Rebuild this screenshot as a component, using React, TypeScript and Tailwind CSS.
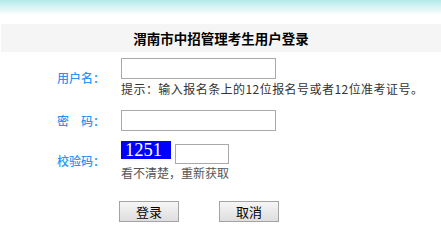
import React from "react";

const cjk = { fontFamily: '"Microsoft YaHei", "Noto Sans CJK SC", "Noto Sans", sans-serif' };

export default function App() {
  return (
    <div className="w-[441px] h-[242px] bg-white overflow-hidden" style={cjk}>
      <div className="h-[15px] bg-gradient-to-b from-[#b3eaea] to-white" />
      <div className="mt-[9px] ml-[1px] h-[28px] bg-[#f5f5f5] flex items-center justify-center text-[13.5px] font-bold text-black">
        渭南市中招管理考生用户登录
      </div>

      {/* row 1 */}
      <div className="mt-[6px] flex items-center">
        <div className="w-[121px] pl-[57px] text-[12px] leading-[16px] font-medium text-[#2b93f8]">用户名：</div>
        <div className="flex flex-col">
          <input className="w-[155px] h-[21px] border border-[#a9a9a9] bg-white outline-none" />
          <div className="mt-[1px] text-[12px] leading-[17px] tracking-[0.45px] text-[#333] whitespace-nowrap">
            提示：输入报名条上的12位报名号或者12位准考证号。
          </div>
        </div>
      </div>

      {/* row 2 */}
      <div className="mt-[13px] flex items-center">
        <div className="w-[121px] pl-[57px] text-[12px] leading-[16px] font-medium text-[#2b93f8]">密　码：</div>
        <input className="w-[155px] h-[21px] border border-[#a9a9a9] bg-white outline-none" />
      </div>

      {/* row 3 */}
      <div className="mt-[10px] flex items-center">
        <div className="w-[121px] pl-[57px] text-[12px] leading-[16px] font-medium text-[#2b93f8]">校验码：</div>
        <div className="flex flex-col">
          <div className="flex items-start">
            <div
              className="w-[50px] h-[18px] bg-[#0000ff] text-white text-[18.5px] leading-[18px] pl-[4px]"
              style={{ fontFamily: '"Liberation Serif", serif' }}
            >
              1251
            </div>
            <input className="ml-[4px] mt-[3px] w-[54px] h-[20px] border border-[#a9a9a9] bg-white outline-none" />
          </div>
          <div className="mt-[1px] text-[12px] leading-[16px] text-[#555]">看不清楚，重新获取</div>
        </div>
      </div>

      {/* buttons */}
      <div className="mt-[20px] flex">
        <button className="ml-[119px] w-[60px] h-[21px] border border-[#a3a3a3] bg-gradient-to-b from-[#f6f6f6] to-[#dedede] text-[13px] leading-[19px] text-black">
          登录
        </button>
        <button className="ml-[40px] w-[60px] h-[21px] border border-[#a3a3a3] bg-gradient-to-b from-[#f6f6f6] to-[#dedede] text-[13px] leading-[19px] text-black">
          取消
        </button>
      </div>
    </div>
  );
}
